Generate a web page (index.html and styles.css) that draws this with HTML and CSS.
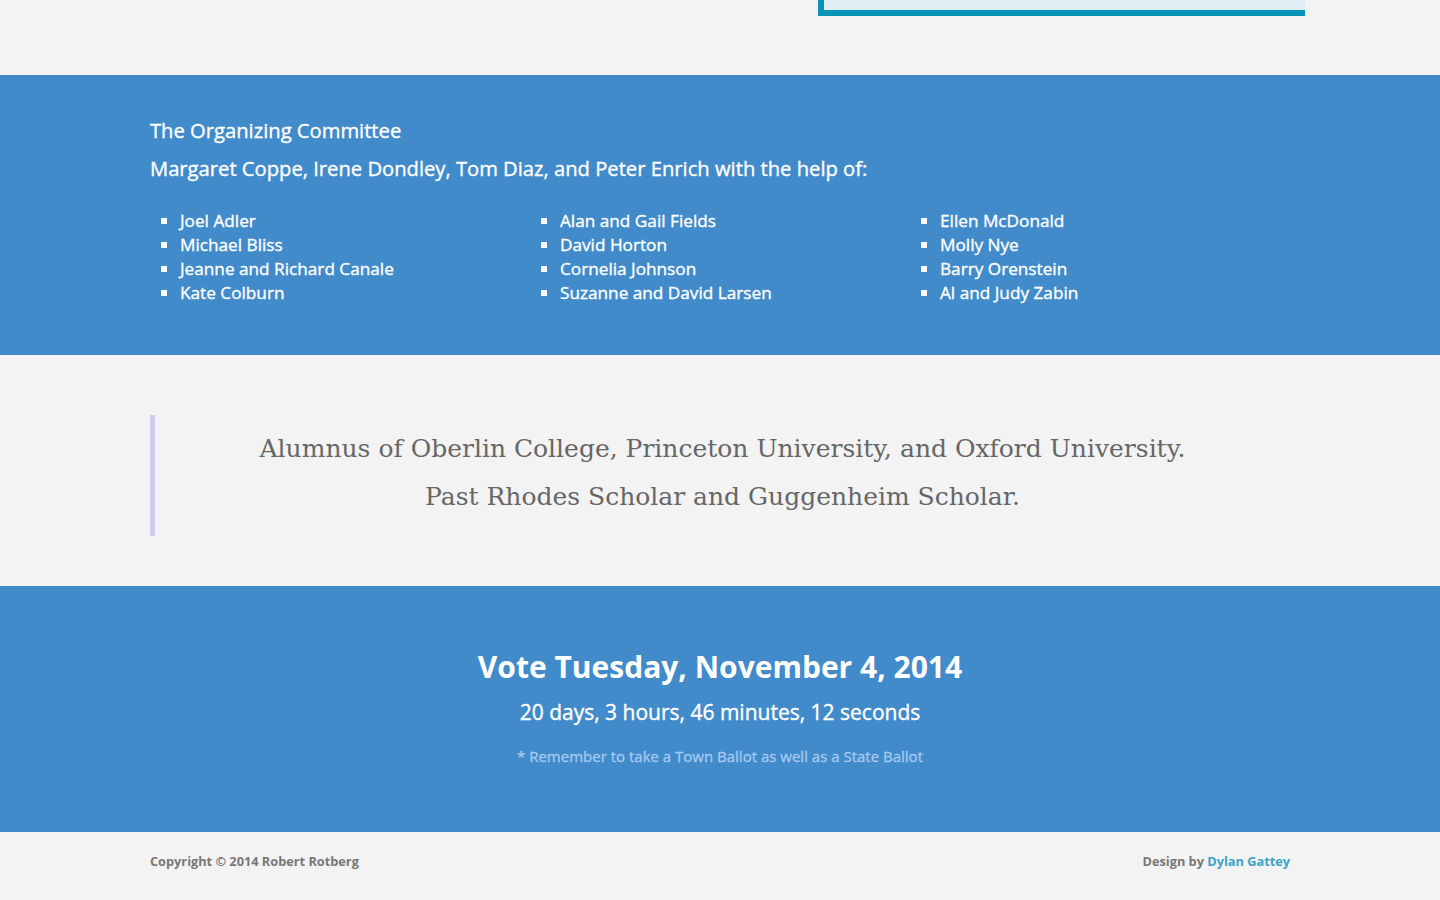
FILE: index.html
```html
<!DOCTYPE html>
<html lang="en">
<head>
<meta charset="utf-8">
<title>Robert Rotberg</title>
<link rel="stylesheet" href="styles.css">
</head>
<body>
<div class="top">
  <div class="top-inner">
    <div class="top-box"></div>
  </div>
</div>

<section class="committee">
  <div class="container">
    <h3 class="committee-title">The Organizing Committee</h3>
    <h3 class="committee-title">Margaret Coppe, Irene Dondley, Tom Diaz, and Peter Enrich with the help of:</h3>
    <div class="helpers">
      <ul class="helper-list">
        <li>Joel Adler</li>
        <li>Michael Bliss</li>
        <li>Jeanne and Richard Canale</li>
        <li>Kate Colburn</li>
      </ul>
      <ul class="helper-list">
        <li>Alan and Gail Fields</li>
        <li>David Horton</li>
        <li>Cornelia Johnson</li>
        <li>Suzanne and David Larsen</li>
      </ul>
      <ul class="helper-list">
        <li>Ellen McDonald</li>
        <li>Molly Nye</li>
        <li>Barry Orenstein</li>
        <li>Al and Judy Zabin</li>
      </ul>
    </div>
  </div>
</section>

<section class="quote">
  <div class="container">
    <blockquote class="bio">
      <p>Alumnus of Oberlin College, Princeton University, and Oxford University.</p>
      <p>Past Rhodes Scholar and Guggenheim Scholar.</p>
    </blockquote>
  </div>
</section>

<section class="vote">
  <div class="container">
    <h2 class="vote-title">Vote Tuesday, November 4, 2014</h2>
    <p class="countdown">20 days, 3 hours, 46 minutes, 12 seconds</p>
    <p class="reminder">* Remember to take a Town Ballot as well as a State Ballot</p>
  </div>
</section>

<footer class="footer">
  <div class="container footer-inner">
    <span class="copy">Copyright © 2014 Robert Rotberg</span>
    <span class="credit">Design by <a href="#">Dylan Gattey</a></span>
  </div>
</footer>
</body>
</html>
```

FILE: styles.css
```css
html, body {
  margin: 0;
  padding: 0;
}

body {
  background: #f3f3f3;
  font-family: "Open Sans", "Liberation Sans", sans-serif;
  color: #555;
}

.container {
  width: 1140px;
  margin: 0 auto;
}

.top {
  height: 75px;
}

.top-inner {
  width: 1170px;
  margin: 0 auto;
  display: flex;
  justify-content: flex-end;
}

.top-box {
  width: 481px;
  height: 10px;
  background: #e0eef3;
  border-left: 6px solid #0794b6;
  border-bottom: 6px solid #0794b6;
}

.committee {
  background: #428bca;
  color: #fff;
  padding: 36px 0 51px;
}

.committee-title {
  margin: 0;
  font-size: 20.2px;
  font-weight: 400;
  line-height: 38px;
  -webkit-text-stroke: 0.35px #fff;
}

.helpers {
  display: grid;
  grid-template-columns: 380px 380px 380px;
  margin-top: 21px;
}

.helper-list {
  margin: 0;
  padding-left: 30px;
  list-style: square;
  font-size: 17.2px;
  font-weight: 400;
  line-height: 24px;
  -webkit-text-stroke: 0.35px #fff;
}

.helper-list li {
  padding-top: 1px;
  margin-bottom: -1px;
}

.quote {
  padding: 60px 0 50px;
}

.bio {
  margin: 0;
  border-left: 5px solid #ccccee;
  padding: 10px 20px 15px;
  text-align: center;
}

.bio p {
  margin: 0;
  font-family: "DejaVu Serif", "Liberation Serif", serif;
  font-weight: 300;
  font-size: 25px;
  line-height: 48px;
  color: #666;
}

.vote {
  background: #428bca;
  color: #fff;
  text-align: center;
  padding: 61px 0 66px;
}

.vote-title {
  margin: 0;
  font-size: 30px;
  font-weight: 700;
  line-height: 40px;
}

.countdown {
  margin: 10px 0 0;
  font-size: 21px;
  font-weight: 400;
  line-height: 30px;
  -webkit-text-stroke: 0.35px #fff;
}

.reminder {
  margin: 19px 0 0;
  font-size: 15px;
  font-weight: 400;
  line-height: 20px;
  color: #a6caf0;
  -webkit-text-stroke: 0.3px #a6caf0;
}

.footer {
  padding: 19px 0 29px;
  font-size: 12.75px;
  line-height: 20px;
  font-weight: 700;
  color: #777;
}

.footer-inner {
  display: flex;
  justify-content: space-between;
}

.credit a {
  color: #3aa3c8;
  text-decoration: none;
}
```
